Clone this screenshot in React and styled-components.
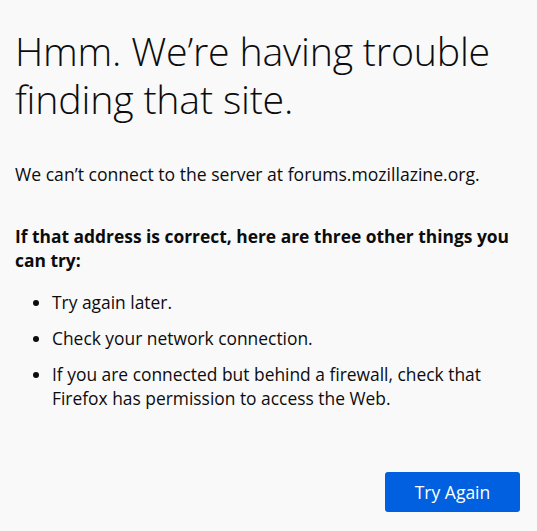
import React from "react";
import styled, { createGlobalStyle } from "styled-components";

const GlobalStyle = createGlobalStyle`
  html, body {
    margin: 0;
    padding: 0;
    background: #f9f9fa;
  }
  body {
    font-family: "Open Sans", "Noto Sans", sans-serif;
    color: #0c0c0d;
  }
`;

const Page = styled.div`
  min-height: 531px;
  box-sizing: border-box;
  padding: 27px 17px 0 15px;
  display: flex;
  flex-direction: column;
`;

const Title = styled.h1`
  margin: 0;
  font-size: 39.3px;
  font-weight: 300;
  line-height: 48px;
  letter-spacing: -0.2px;
`;

const Text = styled.p`
  margin: 39px 0 0;
  font-size: 17.6px;
  line-height: 24px;
`;

const Heading = styled.p`
  margin: 38px 0 0;
  font-size: 17.4px;
  font-weight: 700;
  line-height: 24px;
`;

const List = styled.ul`
  margin: 18px 0 0;
  padding: 0 0 0 37px;
  font-size: 17.4px;
  line-height: 24px;
`;

const Item = styled.li`
  margin-bottom: 12px;
`;

const Actions = styled.div`
  display: flex;
  justify-content: flex-end;
  margin-top: 50px;
`;

const Button = styled.button`
  width: 135px;
  height: 40px;
  border: none;
  border-radius: 3px;
  background: #0060df;
  color: #fff;
  font-family: inherit;
  font-size: 17.5px;
  cursor: pointer;
`;

export default function App() {
  return (
    <>
      <GlobalStyle />
      <Page>
        <Title>Hmm. We’re having trouble finding that site.</Title>
        <Text>We can’t connect to the server at forums.mozillazine.org.</Text>
        <Heading>If that address is correct, here are three other things you can try:</Heading>
        <List>
          <Item>Try again later.</Item>
          <Item>Check your network connection.</Item>
          <Item>If you are connected but behind a firewall, check that Firefox has permission to access the Web.</Item>
        </List>
        <Actions>
          <Button>Try Again</Button>
        </Actions>
      </Page>
    </>
  );
}
